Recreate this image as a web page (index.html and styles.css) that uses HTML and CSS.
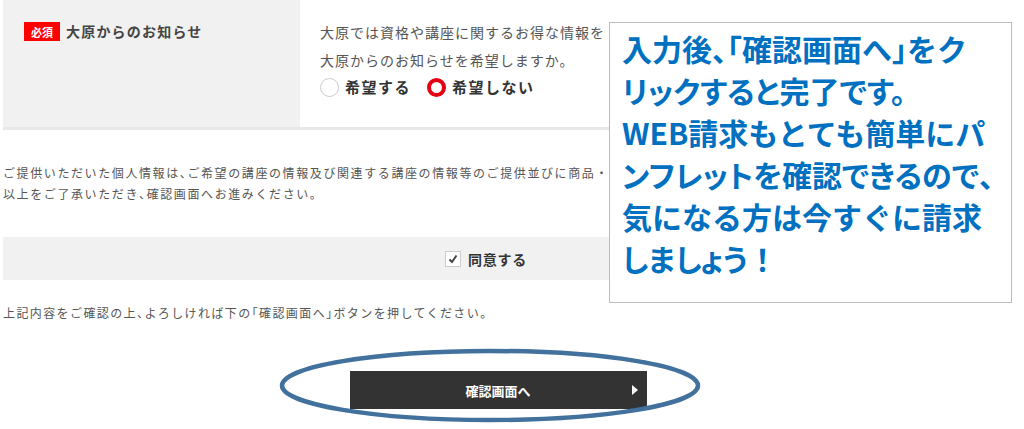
FILE: index.html
```html
<!DOCTYPE html>
<html lang="ja">
  <head>
    <meta charset="UTF-8" />
    <meta name="viewport" content="width=device-width, initial-scale=1.0" />
    <title>資料請求フォーム</title>
    <link rel="stylesheet" href="styles.css">
  </head>
  <body>
    <div class="page">
      <div class="form">
        <div class="notice-row">
          <div class="notice-label">
            <span class="badge">必須</span>
            <span class="label-text">大原からのお知らせ</span>
          </div>
          <div class="notice-body">
            <p>大原では資格や講座に関するお得な情報を</p>
            <p>大原からのお知らせを希望しますか。</p>
            <div class="radios">
              <label class="radio"><span class="radio-mark"></span>希望する</label>
              <label class="radio"><span class="radio-mark is-checked"></span>希望しない</label>
            </div>
          </div>
        </div>

        <p class="privacy">
          ご提供いただいた個人情報は<span class="half">、</span>ご希望の講座の情報及び関連する講座の情報等のご提供並びに商品・<br>
          以上をご了承いただき<span class="half">、</span>確認画面へお進みください。
        </p>

        <div class="agree">
          <span class="checkbox">
            <svg width="10" height="10" viewBox="0 0 10 10"><path d="M1.5 5.5 L4 8 L8.5 1.5" fill="none" stroke="#444" stroke-width="2"/></svg>
          </span>
          同意する
        </div>

        <p class="note">上記内容をご確認の上<span class="half">、</span>よろしければ下の<span class="half">「</span>確認画面へ<span class="half">」</span>ボタンを押してください。</p>

        <div class="submit-wrap">
          <button class="submit">確認画面へ<span class="arrow"></span></button>
        </div>
      </div>

      <!-- 吹き出し -->
      <div class="callout">
        <div class="line">入力後<span class="half">、「</span>確認画面へ<span class="half">」</span>をク</div>
        <div class="line prop">リックすると完了です。</div>
        <div class="line">WEB請求もとても簡単にパ</div>
        <div class="line prop">ンフレットを確認できるので<span class="full">、</span></div>
        <div class="line">気になる方は今すぐに請求</div>
        <div class="line"><span class="prop">しましょう</span>！</div>
      </div>

      <svg class="ring" width="426" height="78" viewBox="0 0 426 78">
        <ellipse cx="213" cy="38.5" rx="208" ry="34.5" fill="none" stroke="#41719c" stroke-width="4.5"/>
      </svg>
    </div>
  </body>
</html>
```

FILE: styles.css
```css
body {
  margin: 0;
  font-family: "Noto Sans CJK JP", "Noto Sans", sans-serif;
  color: #555;
  background: #fff;
}
p {
  margin: 0;
}
.half {
  font-feature-settings: "halt";
}
.page {
  position: relative;
  height: 429px;
  overflow: hidden;
}
.form {
  width: 990px;
  margin-left: 3px;
}
.notice-row {
  display: flex;
  border-bottom: 3px solid #e8e8e8;
}
.notice-label {
  width: 297px;
  height: 127px;
  box-sizing: border-box;
  padding: 22px 0 0 21px;
  background: #f1f1f1;
  display: flex;
  align-items: flex-start;
}
.badge {
  width: 36px;
  height: 19px;
  background: #f00;
  color: #fff;
  font-size: 11px;
  font-weight: bold;
  display: flex;
  align-items: center;
  justify-content: center;
}
.label-text {
  margin-left: 6px;
  font-size: 14px;
  line-height: 19px;
  font-weight: bold;
  letter-spacing: 1.2px;
  color: #444;
}
.notice-body {
  padding: 18px 0 0 20px;
  font-size: 14px;
  line-height: 28px;
  letter-spacing: 1px;
  white-space: nowrap;
}
.radios {
  display: flex;
  align-items: center;
  height: 26px;
}
.radio {
  display: flex;
  align-items: center;
  margin-right: 16px;
  font-size: 15px;
  font-weight: bold;
  letter-spacing: 1.5px;
  color: #333;
}
.radio-mark {
  width: 19px;
  height: 19px;
  box-sizing: border-box;
  border: 1px solid #ccc;
  border-radius: 50%;
  background: #fff;
  margin-right: 6px;
}
.radio-mark.is-checked {
  border: 4px solid #e60012;
}
.privacy,
.note {
  font-size: 12px;
  line-height: 21px;
  letter-spacing: 1.4px;
  white-space: nowrap;
}
.privacy {
  margin-top: 32px;
  letter-spacing: 1.6px;
}
.agree {
  margin-top: 33px;
  height: 43px;
  padding-right: 24px;
  background: #f1f1f1;
  display: flex;
  align-items: center;
  justify-content: center;
  font-size: 14px;
  font-weight: bold;
  letter-spacing: 0.8px;
  color: #333;
}
.checkbox {
  width: 16px;
  height: 16px;
  box-sizing: border-box;
  border: 1px solid #ccc;
  background: #fff;
  margin-right: 7px;
  display: flex;
  align-items: center;
  justify-content: center;
}
.note {
  margin-top: 22px;
}
.submit-wrap {
  margin-top: 48px;
  display: flex;
  justify-content: center;
}
.submit {
  position: relative;
  width: 297px;
  height: 38px;
  border: none;
  background: #333;
  color: #fff;
  font-family: inherit;
  font-size: 13px;
  font-weight: bold;
  cursor: pointer;
}
.submit .arrow {
  position: absolute;
  right: 9px;
  top: 14px;
  border-left: 6px solid #fff;
  border-top: 5px solid transparent;
  border-bottom: 5px solid transparent;
}
.callout {
  position: absolute;
  left: 609px;
  top: 22px;
  width: 403px;
  height: 281px;
  box-sizing: border-box;
  border: 1px solid #bcbcbc;
  background: #fff;
  padding: 4px 0 0 12px;
  color: #0070c0;
  font-size: 30px;
  font-weight: bold;
  line-height: 42px;
  white-space: nowrap;
}
.callout .prop {
  font-feature-settings: "palt";
}
.callout .full {
  font-feature-settings: normal;
}
.ring {
  position: absolute;
  left: 277px;
  top: 347px;
}
```
